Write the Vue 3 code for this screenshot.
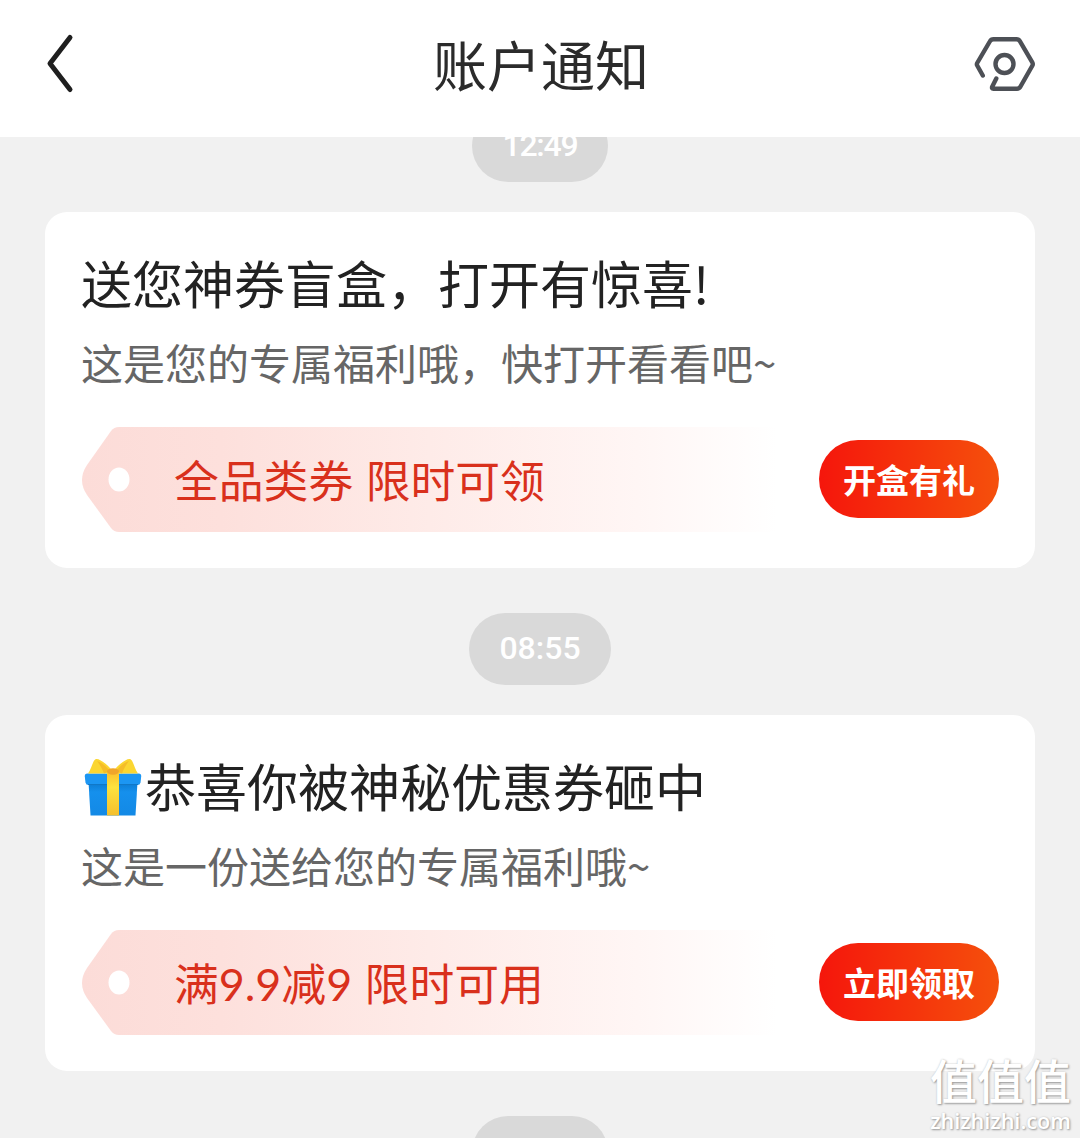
<template>
  <div class="page">
    <header class="header">
      <button class="icon-button" type="button" aria-label="返回">
        <svg width="32" height="62" viewBox="0 0 32 62">
          <path d="M25 4.5 5 30.500 25 56.500" fill="none" stroke="#1f1f1f" stroke-width="5" stroke-linecap="round" stroke-linejoin="round" />
        </svg>
      </button>
      <h1 class="header-title">账户通知</h1>
      <button class="icon-button" type="button" aria-label="设置">
        <svg width="64" height="60" viewBox="0 0 64 60">
          <g fill="none" stroke="#4d5056" stroke-width="4.400" stroke-linecap="round" stroke-linejoin="round">
            <path d="M9.800 41.500 4.200 31.500Q3.500 30.300 4.200 29L16.800 7.500Q18 5.300 20.500 5.300H43.500Q45.800 5.300 47 7.300L59.300 28.300Q60.300 30 59.300 31.800L47.500 52.500Q46.300 54.800 44 54.800H20.500Q18.300 54.800 19.300 52.500L23.300 44.500" />
            <circle cx="31.500" cy="30" r="9" />
          </g>
        </svg>
      </button>
    </header>

    <main class="list">
      <div class="messages">
        <template v-for="item in messages" :key="item.time">
          <div class="time" :class="{ narrow: item.narrow }">{{ item.time }}</div>
          <section class="card">
            <h2 class="title">
              <svg v-if="item.gift" class="gift" width="58" height="60" viewBox="0 0 58 60">
                <defs>
                  <linearGradient id="ribbon" x1="0" y1="0" x2="0" y2="1">
                    <stop offset="0" stop-color="#fbc02d" />
                    <stop offset=".35" stop-color="#fde23e" />
                    <stop offset="1" stop-color="#f4bf2d" />
                  </linearGradient>
                  <linearGradient id="box" x1="0" y1="0" x2="0" y2="1">
                    <stop offset="0" stop-color="#0b79cf" />
                    <stop offset=".3" stop-color="#1590ed" />
                    <stop offset="1" stop-color="#1389e5" />
                  </linearGradient>
                </defs>
                <path d="M4.500 24H53.500L51.500 57.500H6.500Z" fill="url(#box)" />
                <path d="M3.500 15.500H54.500Q57.500 15.500 57.200 18.500L56.500 24.500Q56 27 53.500 27H4.500Q2 27 1.500 24.500L.8 18.500Q.5 15.500 3.500 15.500Z" fill="#1c96f3" />
                <path d="M4 26.500H54" stroke="#1078c8" stroke-width="1" />
                <path d="M23 14H35V57.500H23Z" fill="url(#ribbon)" />
                <path d="M28 12.500C23 6 15 0 11.500 1.200C8.500 3 7.500 11 4 15.500H24Z" fill="#fbd631" />
                <path d="M30 12.500C35 6 43 0 46.500 1.200C49.500 3 50.500 11 54 15.500H34Z" fill="#fbd631" />
                <path d="M20 15.500C18 10 15 5.500 13 3C18 4.500 23 9 26 13ZM38 15.500C40 10 43 5.500 45 3C40 4.500 35 9 32 13Z" fill="#f5bd28" />
                <ellipse cx="29" cy="13.500" rx="6" ry="3.200" fill="#f0a52b" />
              </svg>
              <span>{{ item.title }}</span>
            </h2>
            <p class="desc">{{ item.desc }}</p>
            <div class="row">
              <div class="coupon">
                <svg class="coupon-bg" width="696" height="105" viewBox="0 0 696 105">
                  <defs>
                    <linearGradient id="fade" x1="0" y1="0" x2="1" y2="0">
                      <stop offset="0" stop-color="#fcdcd8" />
                      <stop offset=".2" stop-color="#fde0dc" />
                      <stop offset=".5" stop-color="#feebe8" />
                      <stop offset=".8" stop-color="#fff6f5" />
                      <stop offset="1" stop-color="#ffffff" />
                    </linearGradient>
                  </defs>
                  <path d="M38 0H696V105H38Q33 105 30 101L6 68Q-4 53 6 38L30 4Q33 0 38 0Z" fill="url(#fade)" />
                  <ellipse cx="38" cy="52.500" rx="10.500" ry="12" fill="#fff" />
                </svg>
                <span class="coupon-text">{{ item.coupon }}</span>
              </div>
              <button class="action" type="button">{{ item.action }}</button>
            </div>
          </section>
        </template>
        <div class="time narrow"></div>
      </div>
    </main>

    <div class="watermark">
      <span class="mark-name">值值值</span>
      <span class="mark-site">zhizhizhi.com</span>
    </div>
  </div>
</template>

<script setup>
const messages = [
  {
    time: '12:49',
    narrow: true,
    title: '送您神券盲盒，打开有惊喜!',
    desc: '这是您的专属福利哦，快打开看看吧~',
    coupon: '全品类券 限时可领',
    action: '开盒有礼'
  },
  {
    time: '08:55',
    gift: true,
    title: '恭喜你被神秘优惠券砸中',
    desc: '这是一份送给您的专属福利哦~',
    coupon: '满9.9减9 限时可用',
    action: '立即领取'
  }
]
</script>

<style>
body {
  margin: 0;
  overflow: hidden;
}
</style>

<style scoped>
* {
  box-sizing: border-box;
}

.page {
  position: relative;
  display: flex;
  flex-direction: column;
  height: 1138px;
  overflow: hidden;
  background: #f1f1f1;
  font-family: 'Noto Sans CJK SC', sans-serif;
}

.header {
  display: flex;
  flex: none;
  align-items: center;
  justify-content: space-between;
  height: 137px;
  padding: 0 43px 10px 45px;
  background: #fff;
}

.icon-button {
  display: flex;
  width: 64px;
  padding: 0;
  border: none;
  background: none;
}

.header-title {
  margin: 0;
  padding-top: 1px;
  color: #2b2b2b;
  font-size: 54px;
  font-weight: 400;
  line-height: 72px;
}

.list {
  flex: 1;
  min-height: 0;
  overflow: hidden;
}

.messages {
  display: flex;
  flex-direction: column;
  align-items: center;
  margin-top: -27px;
}

.time {
  flex: none;
  width: 142px;
  height: 72px;
  border-radius: 36px;
  background: #d9d9d9;
  color: #fff;
  font-family: Roboto, sans-serif;
  font-size: 32px;
  font-weight: 500;
  line-height: 70px;
  text-align: center;
}

.time.narrow {
  width: 136px;
  letter-spacing: -1.2px;
}

.card {
  width: 990px;
  height: 356px;
  margin: 30px 0 45px;
  padding: 32px 36px 0;
  border-radius: 22px;
  background: #fff;
}

.title {
  display: flex;
  align-items: center;
  height: 76px;
  margin: 0;
  color: #222;
  font-size: 51px;
  font-weight: 400;
  line-height: 76px;
  white-space: nowrap;
}

.gift {
  flex: none;
  margin: 6px 3px 0;
}

.desc {
  margin: 11px 0 0;
  color: #666;
  font-size: 42px;
  line-height: 62px;
  white-space: nowrap;
}

.row {
  display: flex;
  align-items: flex-start;
  justify-content: space-between;
  margin-top: 34px;
}

.coupon {
  position: relative;
  width: 696px;
  height: 105px;
  padding-left: 93px;
}

.coupon-bg {
  position: absolute;
  top: 0;
  left: 0;
}

.coupon-text {
  position: relative;
  color: #d9301c;
  font-family: Lato, 'Noto Sans CJK SC', sans-serif;
  font-size: 44.800px;
  line-height: 108px;
  word-spacing: 1px;
  white-space: nowrap;
}

.action {
  width: 180px;
  height: 78px;
  margin-top: 13px;
  padding: 0;
  border: none;
  border-radius: 39px;
  background: linear-gradient(90deg, #f5160c, #f5500c);
  color: #fff;
  font-family: inherit;
  font-size: 33px;
  font-weight: 700;
  line-height: 78px;
}

.watermark {
  position: absolute;
  right: 9px;
  bottom: 3px;
  display: flex;
  flex-direction: column;
  align-items: center;
  color: #fff;
  text-shadow: 1px 1px 2px #999, 0 0 2px #ccc;
}

.mark-name {
  font-size: 47px;
  font-weight: 500;
  line-height: 56px;
}

.mark-site {
  font-family: 'Open Sans', sans-serif;
  font-size: 21.600px;
  font-weight: 600;
  line-height: 28px;
}
</style>
